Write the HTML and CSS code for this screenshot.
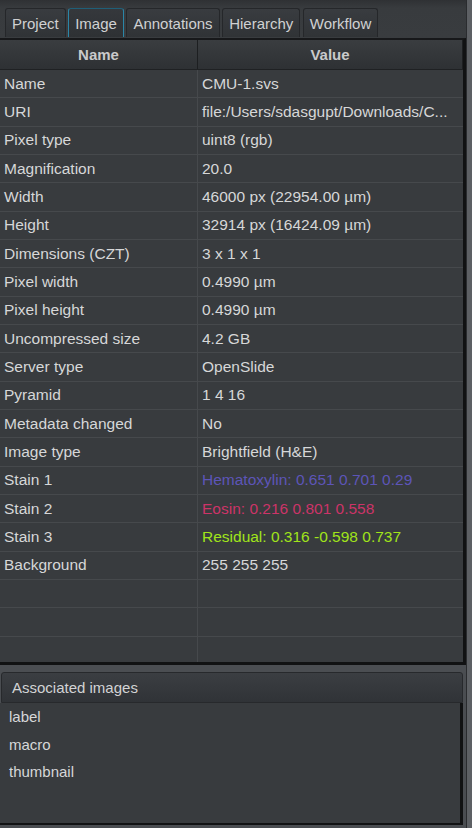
FILE: index.html
```html
<!DOCTYPE html>
<html>
<head>
<meta charset="utf-8">
<link rel="stylesheet" href="styles.css">
</head>
<body>
<div class="window">
  <div class="main">
    <div class="tabbar">
      <div class="tab">Project</div>
      <div class="tab selected">Image</div>
      <div class="tab">Annotations</div>
      <div class="tab">Hierarchy</div>
      <div class="tab">Workflow</div>
    </div>
    <div class="table">
      <div class="thead">
        <div class="th th-name">Name</div>
        <div class="th">Value</div>
      </div>
      <div class="tbody">
        <div class="row"><div class="c1">Name</div><div class="c2">CMU-1.svs</div></div>
        <div class="row"><div class="c1">URI</div><div class="c2">file:/Users/sdasgupt/Downloads/C...</div></div>
        <div class="row"><div class="c1">Pixel type</div><div class="c2">uint8 (rgb)</div></div>
        <div class="row"><div class="c1">Magnification</div><div class="c2">20.0</div></div>
        <div class="row"><div class="c1">Width</div><div class="c2">46000 px (22954.00 µm)</div></div>
        <div class="row"><div class="c1">Height</div><div class="c2">32914 px (16424.09 µm)</div></div>
        <div class="row"><div class="c1">Dimensions (CZT)</div><div class="c2">3 x 1 x 1</div></div>
        <div class="row"><div class="c1">Pixel width</div><div class="c2">0.4990 µm</div></div>
        <div class="row"><div class="c1">Pixel height</div><div class="c2">0.4990 µm</div></div>
        <div class="row"><div class="c1">Uncompressed size</div><div class="c2">4.2 GB</div></div>
        <div class="row"><div class="c1">Server type</div><div class="c2">OpenSlide</div></div>
        <div class="row"><div class="c1">Pyramid</div><div class="c2">1 4 16</div></div>
        <div class="row"><div class="c1">Metadata changed</div><div class="c2">No</div></div>
        <div class="row"><div class="c1">Image type</div><div class="c2">Brightfield (H&amp;E)</div></div>
        <div class="row"><div class="c1">Stain 1</div><div class="c2 hema">Hematoxylin: 0.651 0.701 0.29</div></div>
        <div class="row"><div class="c1">Stain 2</div><div class="c2 eosin">Eosin: 0.216 0.801 0.558</div></div>
        <div class="row"><div class="c1">Stain 3</div><div class="c2 resid">Residual: 0.316 -0.598 0.737</div></div>
        <div class="row"><div class="c1">Background</div><div class="c2">255 255 255</div></div>
        <div class="row"><div class="c1"></div><div class="c2"></div></div>
        <div class="row"><div class="c1"></div><div class="c2"></div></div>
        <div class="row"><div class="c1"></div><div class="c2"></div></div>
      </div>
    </div>
    <div class="divider"></div>
    <div class="assoc">
      <div class="assoc-title">Associated images</div>
      <div class="assoc-list">
        <div class="item">label</div>
        <div class="item">macro</div>
        <div class="item">thumbnail</div>
      </div>
    </div>
  </div>
  <div class="side"></div>
</div>
</body>
</html>
```

FILE: styles.css
```css
html, body {
  margin: 0;
  padding: 0;
}
body {
  background: #5b5e62;
  font-family: "Liberation Sans", Arial, Helvetica, sans-serif;
  font-size: 15px;
  color: #d6d7d8;
}
.window {
  display: flex;
  width: 472px;
  height: 828px;
  overflow: hidden;
}
.main {
  width: 466px;
  display: flex;
  flex-direction: column;
  background: #4a4d51;
}
.side {
  flex: 1;
  background: #5d6064;
  border-left: 1px solid #2a2c2f;
}
.tabbar {
  height: 38px;
  box-sizing: border-box;
  display: flex;
  align-items: flex-end;
  gap: 2.5px;
  padding: 0 0 1px 5px;
  background: linear-gradient(#2f3134 0, #383b3e 8px, #393c3f 100%);
}
.tab {
  height: 29px;
  box-sizing: border-box;
  padding: 0 6px;
  display: flex;
  align-items: center;
  border: 1px solid #25272a;
  border-bottom: none;
  border-radius: 3px 3px 0 0;
  background: linear-gradient(#393c40, #303336);
  color: #d0d1d2;
}
.tab.selected {
  border-color: #1f5f78;
  border-left-color: #2a86a8;
  border-right-color: #2a86a8;
  background: linear-gradient(#35383c, #2e3134);
}
.table {
  width: 463px;
  border-top: 2px solid #17181a;
  border-right: 3px solid #111213;
  border-bottom: 3px solid #111213;
  background: #383b3e;
}
.thead {
  display: grid;
  grid-template-columns: 198px 265px;
  height: 30px;
  box-sizing: border-box;
  background: linear-gradient(#3a3d40, #2e3134);
  border-bottom: 1px solid #1f2123;
}
.th {
  display: flex;
  align-items: center;
  justify-content: center;
  font-weight: bold;
  color: #c9cacb;
  border-right: 1px solid #1d1f21;
}
.th-name {
  border-right: 1px solid #1d1f21;
}
.tbody {
  height: 592px;
  overflow: hidden;
  font-size: 15.5px;
}
.row {
  display: grid;
  grid-template-columns: 198px 265px;
  height: 28.33px;
  box-sizing: border-box;
  border-bottom: 1px solid #46494c;
}
.c1, .c2 {
  display: flex;
  align-items: center;
  white-space: nowrap;
  overflow: hidden;
}
.c1 {
  padding-left: 4px;
  border-right: 1px solid #46494c;
}
.c2 {
  padding-left: 4px;
}
.hema { color: #5d55b8; }
.eosin { color: #cc3468; }
.resid { color: #a0e41a; }
.divider {
  height: 7px;
  background: #4b4e52;
}
.assoc {
  display: flex;
  flex-direction: column;
  width: 463px;
}
.assoc-title {
  height: 31px;
  box-sizing: border-box;
  display: flex;
  align-items: center;
  padding-left: 10px;
  margin-left: 1px;
  border: 1px solid #27292c;
  border-radius: 3px 3px 0 0;
  background: linear-gradient(#3b3e42, #303337);
  color: #d2d3d4;
}
.assoc-list {
  height: 120px;
  background: #383b3e;
  border-right: 3px solid #111213;
  border-bottom: 2px solid #111213;
}
.item {
  height: 27.5px;
  display: flex;
  align-items: center;
  padding-left: 9px;
}
```
